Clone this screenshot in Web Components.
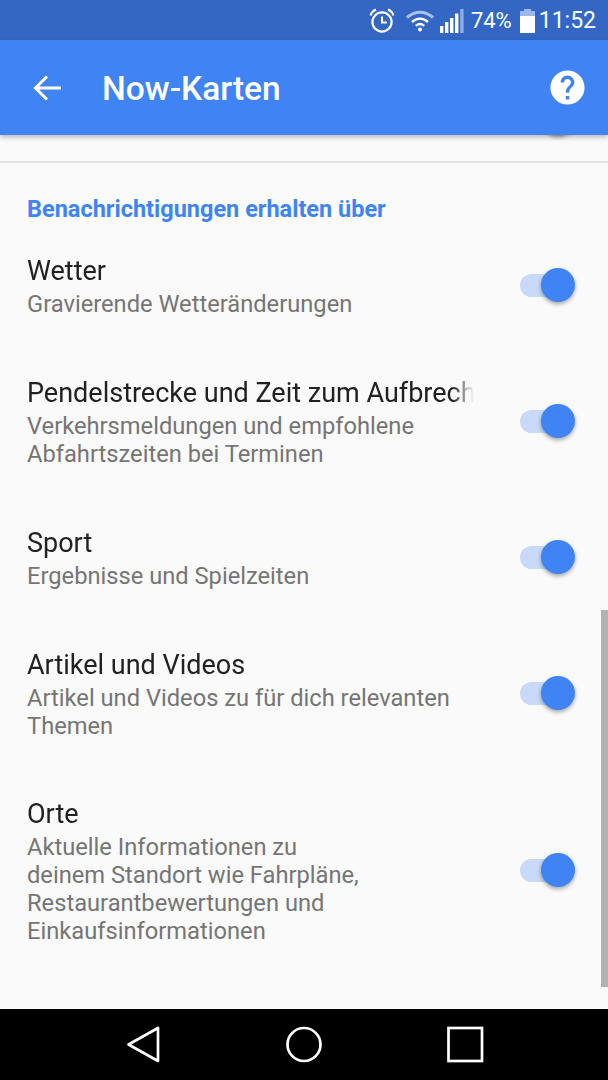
<!DOCTYPE html>
<html lang="de">
<head>
<meta charset="utf-8">
<title>Now-Karten</title>
<style>
  html, body { margin: 0; height: 100%; }
  body { font-family: Roboto, "Liberation Sans", sans-serif; background: #fafafa; }
</style>
</head>
<body>
<now-screen>
  <status-bar></status-bar>
  <app-bar>Now-Karten</app-bar>
  <settings-list>
    <section-head>Benachrichtigungen erhalten über</section-head>
    <pref-row style="--top:0px"><span slot="title">Wetter</span>Gravierende Wetteränderungen</pref-row>
    <pref-row style="--top:56px"><span slot="title">Pendelstrecke und Zeit zum Aufbrechen</span>Verkehrsmeldungen und empfohlene<br>Abfahrtszeiten bei Terminen</pref-row>
    <pref-row style="--top:56px"><span slot="title">Sport</span>Ergebnisse und Spielzeiten</pref-row>
    <pref-row style="--top:56px"><span slot="title">Artikel und Videos</span>Artikel und Videos zu für dich relevanten<br>Themen</pref-row>
    <pref-row style="--top:55px"><span slot="title">Orte</span>Aktuelle Informationen zu<br>deinem Standort wie Fahrpläne,<br>Restaurantbewertungen und<br>Einkaufsinformationen</pref-row>
  </settings-list>
  <nav-bar></nav-bar>
</now-screen>

<script>
function shadow(el, html) {
  el.attachShadow({ mode: "open" }).innerHTML = html;
}

customElements.define("now-screen", class extends HTMLElement {
  connectedCallback() {
    shadow(this, `
      <style>
        :host { display: flex; flex-direction: column; width: 608px; height: 1080px; overflow: hidden; background: #fafafa; }
      </style>
      <slot></slot>`);
  }
});

customElements.define("status-bar", class extends HTMLElement {
  connectedCallback() {
    shadow(this, `
      <style>
        :host { display: flex; align-items: center; justify-content: flex-end; height: 40px; flex: none;
          padding: 1px 12px 0 0; box-sizing: border-box; background: #3367c3; color: #fff; }
        svg { display: block; flex: none; }
        .pct { margin-left: 7px; font-size: 22px; }
        .time { margin-left: 4px; font-size: 23px; }
      </style>
      <svg width="28" height="28" viewBox="0 0 28 28" fill="none" stroke="#fff" stroke-width="2.2" style="margin-right:10px">
        <circle cx="14" cy="15" r="9.6"/>
        <path d="M14 9.5V15.5H19" stroke-width="2"/>
        <path d="M2.5 8.5C3.5 5.5 5.5 3.5 8 2.5M25.5 8.5C24.5 5.5 22.5 3.5 20 2.5" stroke-width="2.2"/>
      </svg>
      <svg width="28" height="22" viewBox="0 0 28 22" fill="none" style="margin-right:6px">
        <path d="M1 7.5C9 .5 19 .5 27 7.5" stroke="#a9c2ed" stroke-width="3"/>
        <path d="M6 12C11 7.6 17 7.6 22 12" stroke="#fff" stroke-width="2.6"/>
        <path d="M9.8 15.8C12.4 13.6 15.6 13.6 18.2 15.8" stroke="#fff" stroke-width="2.4"/>
        <circle cx="14" cy="19.5" r="2" fill="#fff"/>
      </svg>
      <svg width="24" height="24" viewBox="0 0 24 24" fill="#fff">
        <rect x="0" y="17" width="3.4" height="7"/>
        <rect x="5" y="13" width="3.4" height="11"/>
        <rect x="10" y="9" width="3.4" height="15"/>
        <rect x="15" y="4.5" width="3.4" height="19.5"/>
        <rect x="20.2" y="0" width="3.4" height="24" fill="#8fade4"/>
      </svg>
      <span class="pct">74%</span>
      <svg width="15" height="24" viewBox="0 0 15 24" style="margin-left:8px">
        <rect x="0" y="2.5" width="15" height="21.5" fill="#fff"/>
        <rect x="0" y="2.5" width="15" height="4.5" fill="#9db8e8"/>
        <rect x="4" y="0" width="7" height="2.5" fill="#9db8e8"/>
      </svg>
      <span class="time">11:52</span>`);
  }
});

customElements.define("app-bar", class extends HTMLElement {
  connectedCallback() {
    shadow(this, `
      <style>
        :host { display: flex; align-items: center; height: 95px; flex: none; box-sizing: border-box;
          padding: 0 20px 0 33px; background: #4084f3; color: #fff; position: relative; z-index: 2;
          box-shadow: 0 2px 5px rgba(0,0,0,.28); font-size: 33.5px; font-weight: 500; }
        .title { flex: 1; margin-left: 40px; padding-top: 1px; }
        svg { display: block; flex: none; }
      </style>
      <svg width="29" height="28" viewBox="0 0 29 28" fill="none" stroke="#fff" stroke-width="3">
        <path d="M28 14H3M14 2.5L2.5 14L14 25.5"/>
      </svg>
      <span class="title"><slot></slot></span>
      <svg width="41" height="41" viewBox="0 0 24 24" fill="#fff">
        <path d="M12 2C6.48 2 2 6.48 2 12s4.48 10 10 10 10-4.48 10-10S17.52 2 12 2zm1 17h-2v-2h2v2zm2.07-7.75l-.9.92C13.45 12.9 13 13.5 13 15h-2v-.5c0-1.1.45-2.1 1.17-2.83l1.24-1.26c.37-.36.59-.86.59-1.41 0-1.1-.9-2-2-2s-2 .9-2 2H8c0-2.21 1.79-4 4-4s4 1.79 4 4c0 .88-.36 1.68-.93 2.25z"/>
      </svg>`);
  }
});

customElements.define("settings-list", class extends HTMLElement {
  connectedCallback() {
    shadow(this, `
      <style>
        :host { display: block; flex: 1; min-height: 0; position: relative; overflow: hidden; background: #fafafa; }
        .peek { height: 28px; box-sizing: border-box; border-bottom: 2px solid #e3e3e3; overflow: hidden; position: relative; }
        /* thumb of the row scrolled away under the app bar */
        .peek i { position: absolute; left: 541px; top: -34px; width: 34px; height: 34px; border-radius: 50%;
          background: #4084f3; box-shadow: 0 2px 4px rgba(0,0,0,.4); }
        .scroll { position: absolute; right: 0; top: 475px; width: 7px; height: 377px; background: #b2b2b2; }
      </style>
      <div class="peek"><i></i></div>
      <slot></slot>
      <div class="scroll"></div>`);
  }
});

customElements.define("section-head", class extends HTMLElement {
  connectedCallback() {
    shadow(this, `
      <style>
        :host { display: block; padding: 31px 27px 0; height: 89px; box-sizing: border-box;
          font-size: 23.5px; line-height: 30px; font-weight: 700; color: #4084f3; }
      </style>
      <slot></slot>`);
  }
});

customElements.define("pref-row", class extends HTMLElement {
  connectedCallback() {
    shadow(this, `
      <style>
        :host { display: flex; align-items: center; padding: 0 33px 0 27px; margin-top: var(--top, 0); }
        .text { width: 447px; flex: none; min-width: 0; margin-right: 46px; }
        .title { font-size: 27px; line-height: 38px; color: #212121; white-space: nowrap; overflow: hidden;
          -webkit-mask-image: linear-gradient(to right, #000 425px, transparent 447px);
          mask-image: linear-gradient(to right, #000 425px, transparent 447px); }
        .sub { font-size: 23.7px; line-height: 28px; color: #757575; }
      </style>
      <div class="text">
        <div class="title"><slot name="title"></slot></div>
        <div class="sub"><slot></slot></div>
      </div>
      <toggle-switch></toggle-switch>`);
  }
});

customElements.define("toggle-switch", class extends HTMLElement {
  connectedCallback() {
    shadow(this, `
      <style>
        :host { display: block; width: 55px; height: 34px; flex: none; position: relative; margin-top: -1px; }
        .track { position: absolute; left: 0; top: 6px; width: 45px; height: 23px; border-radius: 12px; background: #c8daf8; }
        .thumb { position: absolute; right: 0; top: 0; width: 34px; height: 34px; border-radius: 50%;
          background: #4084f3; box-shadow: 0 2px 4px rgba(0,0,0,.35); }
      </style>
      <div class="track"></div>
      <div class="thumb"></div>`);
  }
});

customElements.define("nav-bar", class extends HTMLElement {
  connectedCallback() {
    shadow(this, `
      <style>
        :host { display: flex; justify-content: center; align-items: center; gap: 124px; height: 71px; flex: none; background: #000; }
        svg { display: block; flex: none; }
      </style>
      <svg width="37" height="39" viewBox="0 0 37 39" fill="none" stroke="#fff" stroke-width="2.7" stroke-linejoin="round">
        <path d="M3.5 19.5L33 3V36Z"/>
      </svg>
      <svg width="37" height="39" viewBox="0 0 37 39" fill="none" stroke="#fff" stroke-width="2.7">
        <circle cx="18" cy="19.5" r="16.5"/>
      </svg>
      <svg width="37" height="39" viewBox="0 0 37 39" fill="none" stroke="#fff" stroke-width="2.7">
        <rect x="1.5" y="3" width="33.5" height="33"/>
      </svg>`);
  }
});
</script>
</body>
</html>
